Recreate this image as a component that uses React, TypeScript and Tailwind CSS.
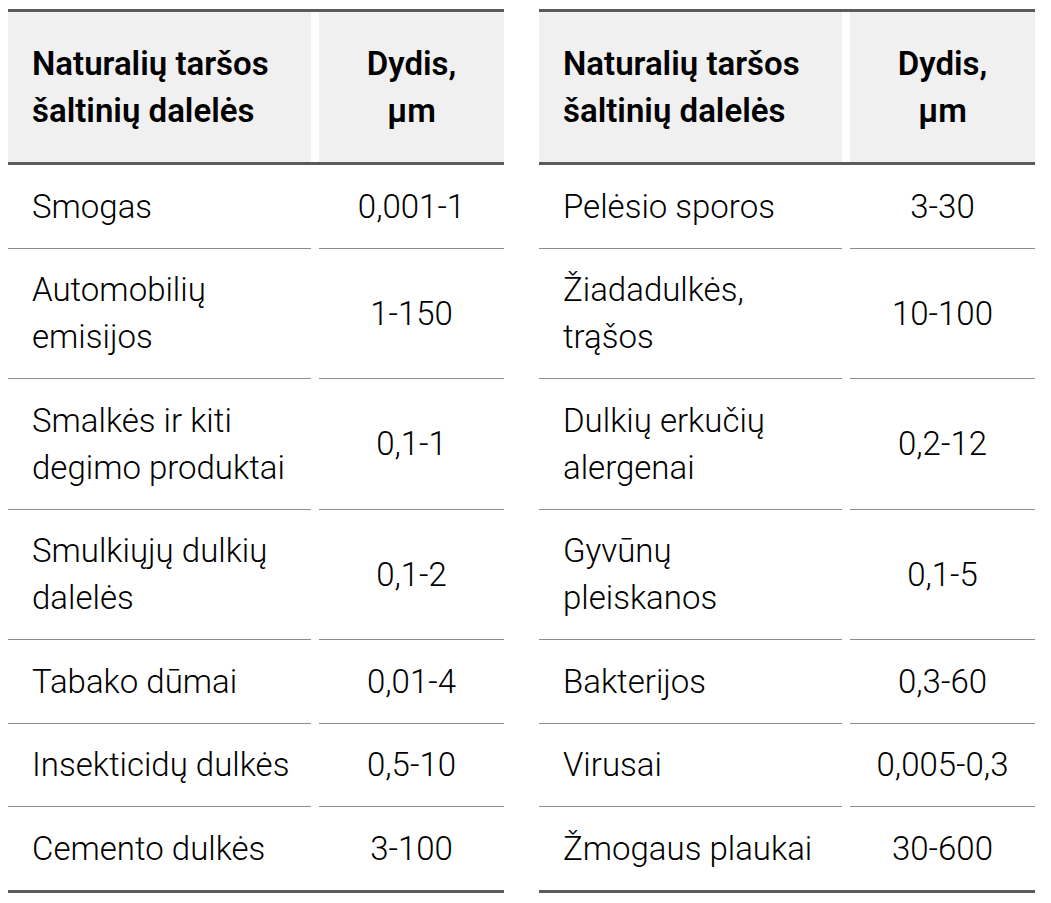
import React from "react";

type Row = [string, string];

const left: Row[] = [
  ["Smogas", "0,001-1"],
  ["Automobilių emisijos", "1-150"],
  ["Smalkės ir kiti degimo produktai", "0,1-1"],
  ["Smulkiųjų dulkių dalelės", "0,1-2"],
  ["Tabako dūmai", "0,01-4"],
  ["Insekticidų dulkės", "0,5-10"],
  ["Cemento dulkės", "3-100"],
];

const right: Row[] = [
  ["Pelėsio sporos", "3-30"],
  ["Žiadadulkės, trąšos", "10-100"],
  ["Dulkių erkučių alergenai", "0,2-12"],
  ["Gyvūnų pleiskanos", "0,1-5"],
  ["Bakterijos", "0,3-60"],
  ["Virusai", "0,005-0,3"],
  ["Žmogaus plaukai", "30-600"],
];

const breaks: Record<string, React.ReactNode> = {
  "Automobilių emisijos": (<>Automobilių<br />emisijos</>),
  "Smalkės ir kiti degimo produktai": (<>Smalkės ir kiti<br />degimo produktai</>),
  "Smulkiųjų dulkių dalelės": (<>Smulkiųjų dulkių<br />dalelės</>),
  "Žiadadulkės, trąšos": (<>Žiadadulkės,<br />trąšos</>),
  "Dulkių erkučių alergenai": (<>Dulkių erkučių<br />alergenai</>),
  "Gyvūnų pleiskanos": (<>Gyvūnų<br />pleiskanos</>),
};

function Table({ rows }: { rows: Row[] }) {
  return (
    <div className="w-[496px] border-t-[3px] border-b-[3px] border-[#5b5b5b]">
      <div className="grid grid-cols-[303px_185px] gap-x-[8px] border-b-[3px] border-[#5b5b5b]">
        <div className="bg-[#f0f0f0] pl-[24px] py-[28px] text-[33px] leading-[47px] font-semibold text-black whitespace-nowrap">
          Naturalių taršos
          <br />
          šaltinių dalelės
        </div>
        <div className="bg-[#f0f0f0] py-[28px] text-center text-[33px] leading-[47px] font-semibold text-black">
          Dydis,
          <br />
          μm
        </div>
      </div>
      <div className="grid grid-cols-[303px_185px] gap-x-[8px]">
        {rows.map(([name, val], i) => {
          const last = i === rows.length - 1;
          const b = last ? "" : "border-b-[1.5px] border-[#8c8c8c]";
          return (
            <React.Fragment key={name}>
              <div className={`pl-[24px] py-[17.75px] text-[33px] leading-[47px] font-light text-black flex items-center whitespace-nowrap ${b}`}>
                <span>{breaks[name] ?? name}</span>
              </div>
              <div className={`py-[17.75px] text-[33px] leading-[47px] font-light text-black flex items-center justify-center whitespace-nowrap ${b}`}>
                {val}
              </div>
            </React.Fragment>
          );
        })}
      </div>
    </div>
  );
}

export default function App() {
  return (
    <div
      className="w-[1051px] h-[903px] bg-white flex items-start gap-[35px] pl-[8px] pt-[9px]"
      style={{ fontFamily: "Roboto, 'Noto Sans', sans-serif" }}
    >
      <Table rows={left} />
      <Table rows={right} />
    </div>
  );
}
